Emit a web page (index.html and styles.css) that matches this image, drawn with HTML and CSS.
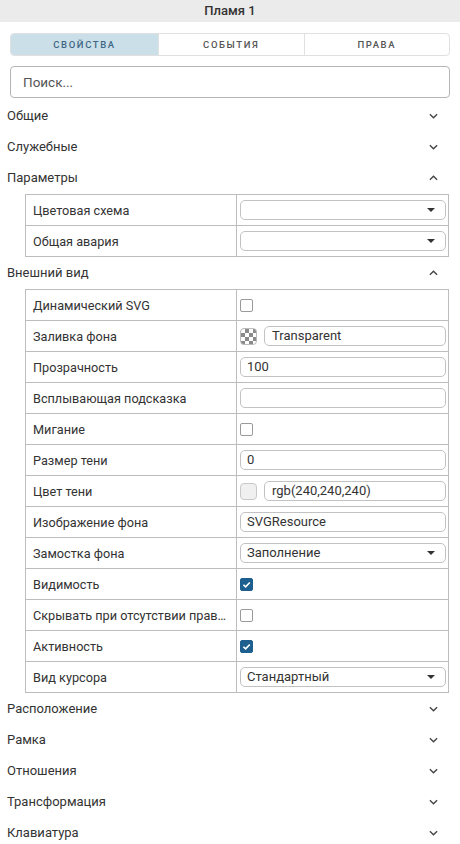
FILE: index.html
```html
<!DOCTYPE html>
<html lang="ru">
  <head>
    <meta charset="UTF-8" />
    <meta name="viewport" content="width=device-width, initial-scale=1.0" />
    <title>Пламя 1</title>
    <link rel="stylesheet" href="styles.css">
  </head>
  <body>
    <div class="panel">
      <div class="panel-title">Пламя 1</div>

      <div class="tabs">
        <div class="tab active">Свойства</div>
        <div class="tab">События</div>
        <div class="tab">Права</div>
      </div>

      <div class="search">Поиск...</div>

      <div class="group">
        <div class="group-head">
          <span>Общие</span>
          <svg class="chevron" viewBox="0 0 10 6"><path d="M1 1l4 4 4-4" /></svg>
        </div>
      </div>

      <div class="group">
        <div class="group-head">
          <span>Служебные</span>
          <svg class="chevron" viewBox="0 0 10 6"><path d="M1 1l4 4 4-4" /></svg>
        </div>
      </div>

      <div class="group">
        <div class="group-head">
          <span>Параметры</span>
          <svg class="chevron" viewBox="0 0 10 6"><path d="M1 5l4-4 4 4" /></svg>
        </div>
        <table class="props">
          <tr>
            <td>Цветовая схема</td>
            <td><div class="field select"></div></td>
          </tr>
          <tr>
            <td>Общая авария</td>
            <td><div class="field select"></div></td>
          </tr>
        </table>
      </div>

      <div class="group">
        <div class="group-head">
          <span>Внешний вид</span>
          <svg class="chevron" viewBox="0 0 10 6"><path d="M1 5l4-4 4 4" /></svg>
        </div>
        <table class="props">
          <tr>
            <td>Динамический SVG</td>
            <td><span class="check"></span></td>
          </tr>
          <tr>
            <td>Заливка фона</td>
            <td>
              <div class="color-row">
                <span class="swatch checker"></span>
                <div class="field">Transparent</div>
              </div>
            </td>
          </tr>
          <tr>
            <td>Прозрачность</td>
            <td><div class="field">100</div></td>
          </tr>
          <tr>
            <td>Всплывающая подсказка</td>
            <td><div class="field"></div></td>
          </tr>
          <tr>
            <td>Мигание</td>
            <td><span class="check"></span></td>
          </tr>
          <tr>
            <td>Размер тени</td>
            <td><div class="field">0</div></td>
          </tr>
          <tr>
            <td>Цвет тени</td>
            <td>
              <div class="color-row">
                <span class="swatch"></span>
                <div class="field">rgb(240,240,240)</div>
              </div>
            </td>
          </tr>
          <tr>
            <td>Изображение фона</td>
            <td><div class="field">SVGResource</div></td>
          </tr>
          <tr>
            <td>Замостка фона</td>
            <td><div class="field select">Заполнение</div></td>
          </tr>
          <tr>
            <td>Видимость</td>
            <td>
              <span class="check on">
                <svg viewBox="0 0 10 10"><path d="M2.2 5.2l2 2 3.8-4" /></svg>
              </span>
            </td>
          </tr>
          <tr>
            <td><div class="label-cut">Скрывать при отсутствии прав…</div></td>
            <td><span class="check"></span></td>
          </tr>
          <tr>
            <td>Активность</td>
            <td>
              <span class="check on">
                <svg viewBox="0 0 10 10"><path d="M2.2 5.2l2 2 3.8-4" /></svg>
              </span>
            </td>
          </tr>
          <tr>
            <td>Вид курсора</td>
            <td><div class="field select">Стандартный</div></td>
          </tr>
        </table>
      </div>

      <div class="group">
        <div class="group-head">
          <span>Расположение</span>
          <svg class="chevron" viewBox="0 0 10 6"><path d="M1 1l4 4 4-4" /></svg>
        </div>
      </div>

      <div class="group">
        <div class="group-head">
          <span>Рамка</span>
          <svg class="chevron" viewBox="0 0 10 6"><path d="M1 1l4 4 4-4" /></svg>
        </div>
      </div>

      <div class="group">
        <div class="group-head">
          <span>Отношения</span>
          <svg class="chevron" viewBox="0 0 10 6"><path d="M1 1l4 4 4-4" /></svg>
        </div>
      </div>

      <div class="group">
        <div class="group-head">
          <span>Трансформация</span>
          <svg class="chevron" viewBox="0 0 10 6"><path d="M1 1l4 4 4-4" /></svg>
        </div>
      </div>

      <div class="group">
        <div class="group-head">
          <span>Клавиатура</span>
          <svg class="chevron" viewBox="0 0 10 6"><path d="M1 1l4 4 4-4" /></svg>
        </div>
      </div>
    </div>
  </body>
</html>
```

FILE: styles.css
```css
body {
  margin: 0;
  padding: 0;
  background: #fff;
  font-family: Roboto, "Liberation Sans", sans-serif;
  font-size: 13px;
  color: #333;
}

.panel {
  width: 460px;
}

.panel-title {
  height: 22px;
  line-height: 22px;
  background: #ebebeb;
  text-align: center;
  font-weight: 500;
  font-size: 13px;
  color: #333;
}

/* вкладки */
.tabs {
  display: grid;
  grid-template-columns: 147px 1fr 1fr;
  margin: 11px 10px 0;
  height: 21px;
  border: 1px solid #e0e0e0;
  border-radius: 4px;
  overflow: hidden;
}
.tab {
  line-height: 21px;
  text-align: center;
  text-transform: uppercase;
  font-size: 9.5px;
  font-weight: 500;
  letter-spacing: 1.6px;
  color: #555;
  border-left: 1px solid #e0e0e0;
}
.tab:first-child {
  border-left: none;
}
.tab.active {
  background: #cbdfe8;
  color: #3f6685;
}

.search {
  margin: 10px 10px 0;
  height: 30px;
  line-height: 30px;
  padding-left: 12px;
  border: 1px solid #b5b5b5;
  border-radius: 4px;
  font-size: 13.5px;
  color: #555;
}

.search + .group {
  margin-top: 2px;
}

.group-head {
  display: flex;
  align-items: center;
  justify-content: space-between;
  height: 31px;
  padding: 0 22px 0 7px;
  font-size: 13px;
  color: #333;
}
.chevron {
  width: 9px;
  height: 6px;
  fill: none;
  stroke: #444;
  stroke-width: 1.5;
}

/* таблица свойств */
.props {
  border-collapse: collapse;
  margin: 1px 0 0 25px;
  width: 424px;
  table-layout: fixed;
}
.props td {
  border: 1px solid #bdbdbd;
  height: 30px;
  padding: 0;
  vertical-align: middle;
}
.props td:first-child {
  width: 203px;
  padding-left: 7px;
  font-size: 12.7px;
  color: #333;
  white-space: nowrap;
  overflow: hidden;
}
.props td:last-child {
  padding: 0 2px 0 3px;
}
.label-cut {
  width: 203px;
  overflow: hidden;
  white-space: nowrap;
}

.field {
  position: relative;
  height: 18px;
  line-height: 18px;
  border: 1px solid #c2c2c2;
  border-radius: 5px;
  padding-left: 6px;
  color: #333;
  font-size: 13px;
}
.field.select::after {
  content: "";
  position: absolute;
  right: 10px;
  top: 7px;
  border-left: 4px solid transparent;
  border-right: 4px solid transparent;
  border-top: 4px solid #333;
}

.color-row {
  display: flex;
  align-items: center;
  gap: 7px;
}
.color-row .field {
  flex: 1;
  padding-left: 7px;
}
.swatch {
  width: 15px;
  height: 15px;
  border: 1px solid #c8c8c8;
  border-radius: 4px;
  background: #f0f0f0;
  flex: none;
}
.swatch.checker {
  border-color: #bbb;
  background-color: #fff;
  background-image:
    linear-gradient(45deg, #8a8a8a 25%, transparent 25%, transparent 75%, #8a8a8a 75%),
    linear-gradient(45deg, #8a8a8a 25%, transparent 25%, transparent 75%, #8a8a8a 75%);
  background-size: 8px 8px;
  background-position: 0 0, 4px 4px;
}

.check {
  display: block;
  width: 11px;
  height: 11px;
  border: 1.5px solid #9a9a9a;
  border-radius: 2px;
  background: #fff;
}
.check.on {
  background: #1d5f8e;
  border-color: #1d5f8e;
}
.check svg {
  display: block;
  width: 11px;
  height: 11px;
  fill: none;
  stroke: #fff;
  stroke-width: 1.5;
}
```
